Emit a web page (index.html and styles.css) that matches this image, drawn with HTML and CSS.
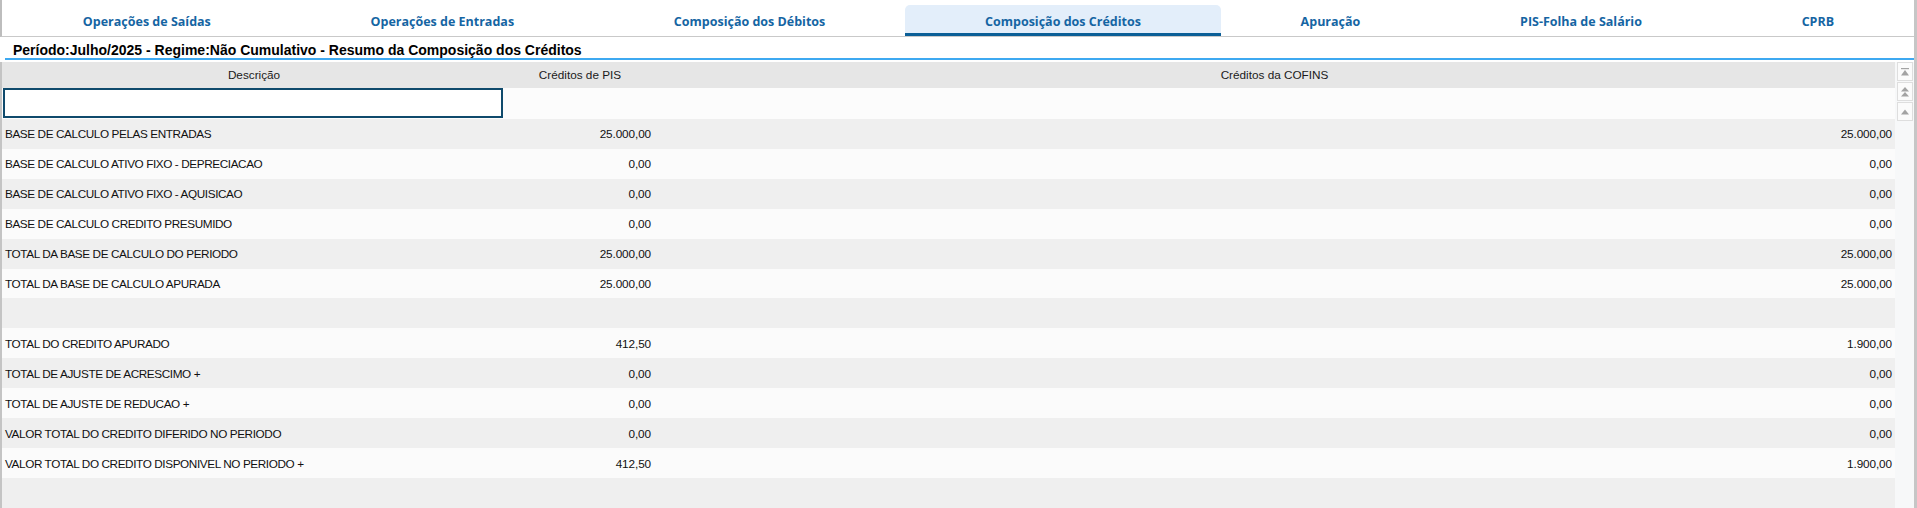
FILE: index.html
```html
<!DOCTYPE html>
<html lang="pt-BR">
<head>
<meta charset="utf-8">
<title>Composição dos Créditos</title>
<link rel="stylesheet" href="styles.css">
</head>
<body>
<div class="page">
  <nav class="tabs">
    <div class="tab">Operações de Saídas</div>
    <div class="tab">Operações de Entradas</div>
    <div class="tab">Composição dos Débitos</div>
    <div class="tab active">Composição dos Créditos</div>
    <div class="tab">Apuração</div>
    <div class="tab">PIS-Folha de Salário</div>
    <div class="tab">CPRB</div>
  </nav>
  <div class="content">
    <div class="title-bar"><h1 class="title">Período:Julho/2025 - Regime:Não Cumulativo - Resumo da Composição dos Créditos</h1></div>
    <div class="grid-wrap">
      <div class="grid">
        <div class="row head">
          <div class="cell c-desc">Descrição</div>
          <div class="cell c-pis">Créditos de PIS</div>
          <div class="cell c-cof">Créditos da COFINS</div>
        </div>
        <div class="row filter">
          <div class="cell c-desc"><input class="filter-input" type="text"></div>
          <div class="cell c-pis"></div>
          <div class="cell c-cof"></div>
        </div>
        <div class="row odd"><div class="cell c-desc">BASE DE CALCULO PELAS ENTRADAS</div><div class="cell c-pis num">25.000,00</div><div class="cell c-cof num">25.000,00</div></div>
        <div class="row even"><div class="cell c-desc">BASE DE CALCULO ATIVO FIXO - DEPRECIACAO</div><div class="cell c-pis num">0,00</div><div class="cell c-cof num">0,00</div></div>
        <div class="row odd"><div class="cell c-desc">BASE DE CALCULO ATIVO FIXO - AQUISICAO</div><div class="cell c-pis num">0,00</div><div class="cell c-cof num">0,00</div></div>
        <div class="row even"><div class="cell c-desc">BASE DE CALCULO CREDITO PRESUMIDO</div><div class="cell c-pis num">0,00</div><div class="cell c-cof num">0,00</div></div>
        <div class="row odd"><div class="cell c-desc">TOTAL DA BASE DE CALCULO DO PERIODO</div><div class="cell c-pis num">25.000,00</div><div class="cell c-cof num">25.000,00</div></div>
        <div class="row even"><div class="cell c-desc">TOTAL DA BASE DE CALCULO APURADA</div><div class="cell c-pis num">25.000,00</div><div class="cell c-cof num">25.000,00</div></div>
        <div class="row odd"><div class="cell c-desc"></div><div class="cell c-pis num"></div><div class="cell c-cof num"></div></div>
        <div class="row even"><div class="cell c-desc">TOTAL DO CREDITO APURADO</div><div class="cell c-pis num">412,50</div><div class="cell c-cof num">1.900,00</div></div>
        <div class="row odd"><div class="cell c-desc">TOTAL DE AJUSTE DE ACRESCIMO +</div><div class="cell c-pis num">0,00</div><div class="cell c-cof num">0,00</div></div>
        <div class="row even"><div class="cell c-desc">TOTAL DE AJUSTE DE REDUCAO +</div><div class="cell c-pis num">0,00</div><div class="cell c-cof num">0,00</div></div>
        <div class="row odd"><div class="cell c-desc">VALOR TOTAL DO CREDITO DIFERIDO NO PERIODO</div><div class="cell c-pis num">0,00</div><div class="cell c-cof num">0,00</div></div>
        <div class="row even"><div class="cell c-desc">VALOR TOTAL DO CREDITO DISPONIVEL NO PERIODO +</div><div class="cell c-pis num">412,50</div><div class="cell c-cof num">1.900,00</div></div>
        <div class="row odd"><div class="cell c-desc"></div><div class="cell c-pis num"></div><div class="cell c-cof num"></div></div>
      </div>
      <div class="vscroll">
        <div class="sbtn"><svg width="10" height="10" viewBox="0 0 10 10"><rect x="1" y="1" width="8" height="1.2" fill="#a3a3a3"/><path d="M5 3 L9 8.5 L1 8.5 Z" fill="#a3a3a3"/></svg></div>
        <div class="sbtn"><svg width="10" height="12" viewBox="0 0 10 12"><path d="M5 1 L9 5.5 L1 5.5 Z" fill="#a3a3a3"/><path d="M5 6 L9 10.5 L1 10.5 Z" fill="#a3a3a3"/></svg></div>
        <div class="sbtn"><svg width="10" height="10" viewBox="0 0 10 10"><path d="M5 2.5 L9 7.5 L1 7.5 Z" fill="#a3a3a3"/></svg></div>
      </div>
    </div>
  </div>
</div>
</body>
</html>
```
FILE: styles.css
```css
* { box-sizing: border-box; }
html, body { margin: 0; padding: 0; }
body {
  width: 1917px;
  height: 508px;
  overflow: hidden;
  background: #ffffff;
  font-family: "Liberation Sans", Arial, sans-serif;
  color: #1a1a1a;
}
.page {
  height: 508px;
  border-right: 3px solid #c6c6c6;
  display: flex;
  flex-direction: column;
}
.tabs {
  display: flex;
  height: 37px;
  padding-top: 5px;
  border-left: 2px solid #bdbdbd;
  border-bottom: 1px solid #c9c9c9;
  padding-left: 1px;
}
.tab {
  flex: 1 1 auto;
  padding: 4px 10px 0;
  display: flex;
  align-items: center;
  justify-content: center;
  font-family: "Open Sans", "DejaVu Sans", sans-serif;
  font-weight: 700;
  font-size: 12.5px;
  color: #1565a3;
  border-bottom: 3px solid transparent;
  border-radius: 5px 5px 0 0;
  white-space: nowrap;
}
.tab.active {
  background: #e3eefa;
  border-bottom-color: #0b5f97;
}
.content {
  flex: 1;
  display: flex;
  flex-direction: column;
  min-height: 0;
}
.title-bar {
  margin-left: 5px;
  height: 23px;
  border-bottom: 2px solid #3ea9f1;
  display: flex;
  align-items: flex-end;
}
.title {
  margin: 0 0 0 8px;
  font-size: 14px;
  font-weight: 700;
  color: #000;
  line-height: 16px;
}
.grid-wrap {
  flex: 1;
  display: flex;
  margin-top: 2px;
  min-height: 0;
  border-left: 2px solid #c4c4c4;
}
.grid {
  flex: 1;
  display: flex;
  flex-direction: column;
}
.row {
  display: grid;
  grid-template-columns: 504px 148px 1fr;
  height: 30px;
  align-items: center;
  font-size: 11.75px;
  letter-spacing: -0.4px;
  color: #111111;
}
.row.head {
  height: 26px;
  background: #e6e6e6;
  color: #1a1a1a;
  letter-spacing: 0;
}
.row.head .cell { text-align: center; }
.row.filter {
  height: 31px;
  background: #fcfcfc;
}
.row.odd { background: #efefef; }
.row.even { background: #fbfbfb; }
.cell {
  padding: 0 3px;
  white-space: nowrap;
  overflow: hidden;
}
.cell.num { text-align: right; letter-spacing: -0.1px; }
.row.filter .c-desc { padding: 0 0 0 1px; height: 31px; display: flex; align-items: center; }
.filter-input {
  width: 500px;
  height: 30px;
  margin: 0;
  border: 2px solid #0f4a6c;
  background: #ffffff;
  outline: none;
}
.vscroll {
  width: 19px;
  background: #f7f8f9;
  display: flex;
  flex-direction: column;
  align-items: flex-end;
  padding-top: 0;
  gap: 1px;
}
.sbtn {
  width: 16px;
  height: 19px;
  margin-right: 1px;
  background: #fbfbfb;
  border: 1px solid #dedede;
  display: flex;
  align-items: center;
  justify-content: center;
}
```
